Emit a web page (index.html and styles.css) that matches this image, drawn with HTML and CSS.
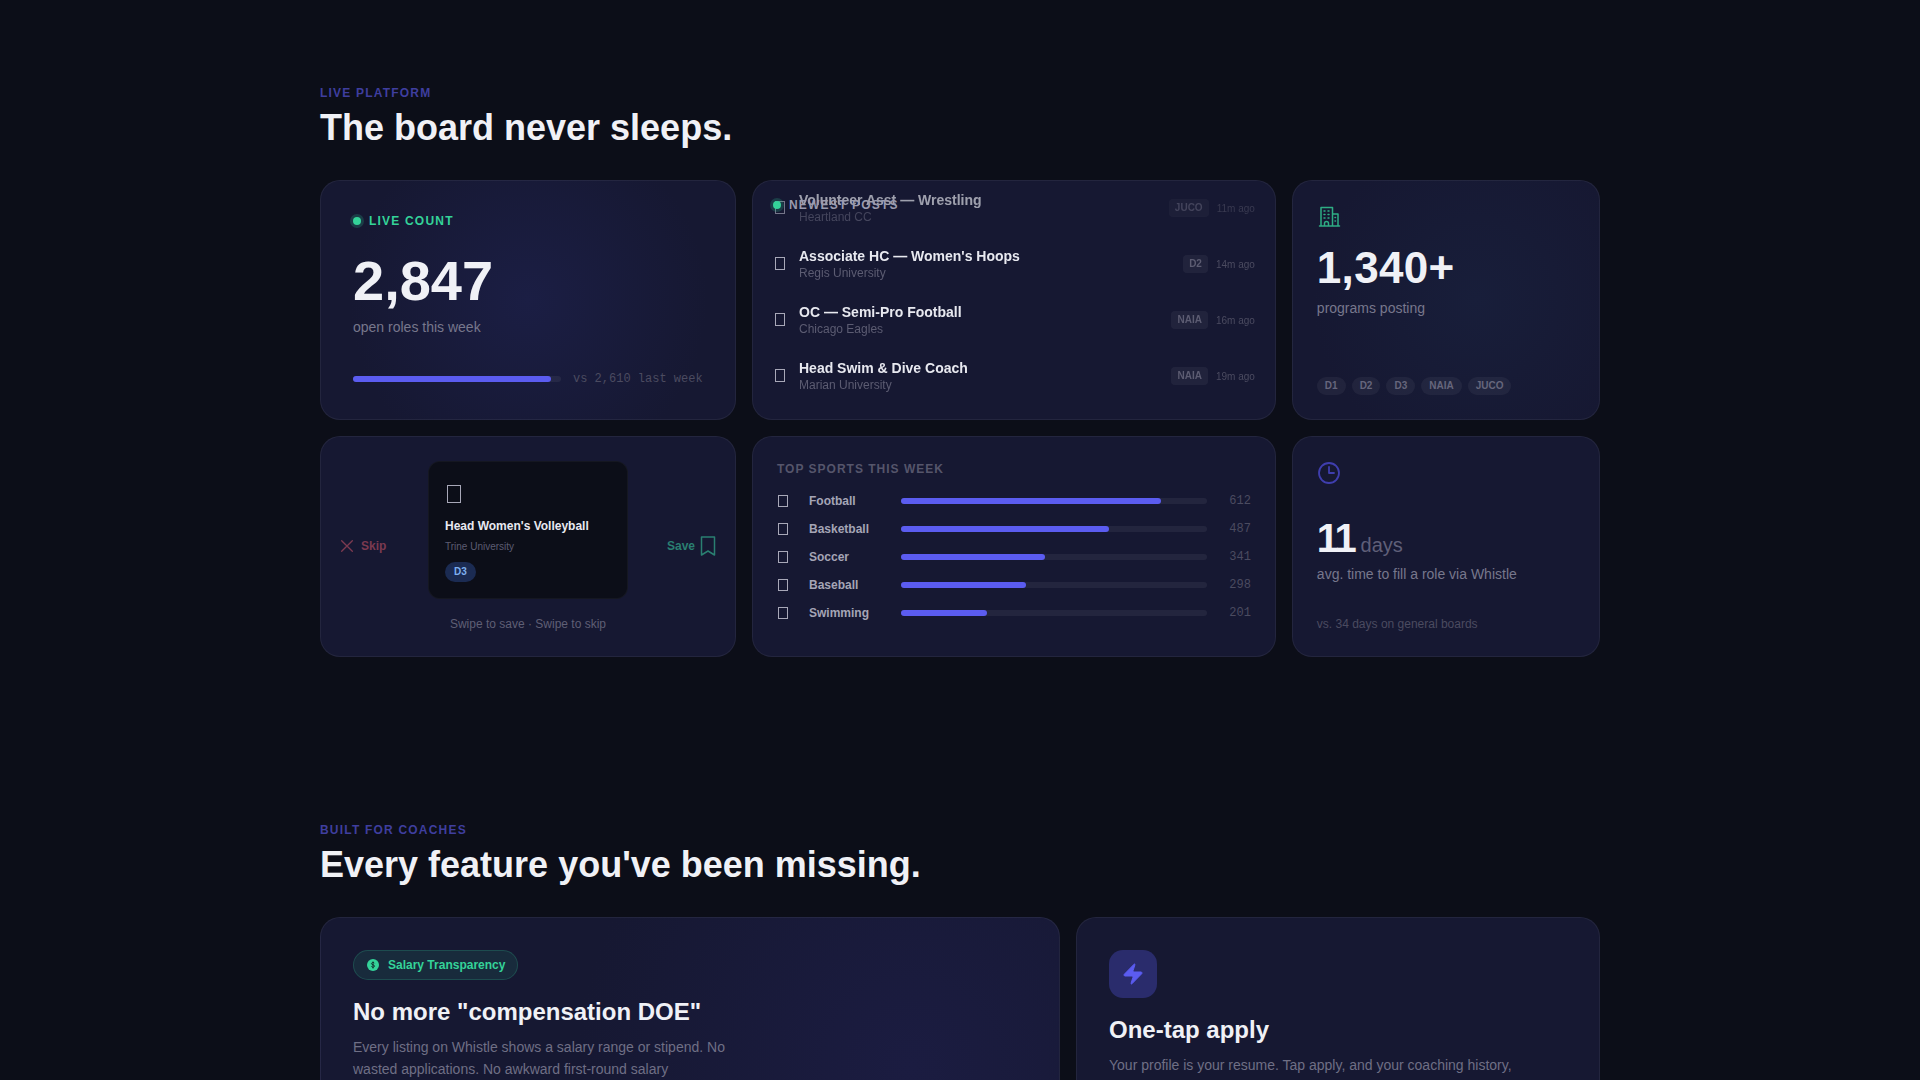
FILE: index.html
```html
<!DOCTYPE html>
<html lang="en">
<head>
  <meta charset="UTF-8" />
  <title>Whistle</title>
  <link rel="stylesheet" href="styles.css">
</head>
<body>
  <section class="section section-live">
    <div class="eyebrow">LIVE PLATFORM</div>
    <h2>The board never sleeps.</h2>
    <div class="bento">
      <div class="card card-count">
        <div class="live-label"><span class="dot"></span>LIVE COUNT</div>
        <div class="big-num">2,847</div>
        <div class="sub">open roles this week</div>
        <div class="compare">
          <div class="track"><div class="fill" style="width: 95%"></div></div>
          <span class="mono">vs 2,610 last week</span>
        </div>
      </div>

      <div class="card card-ticker">
        <div class="ticker-label"><span class="dot"></span>NEWEST POSTS</div>
        <div class="ticker">
          <div class="post">
            <span class="glyph"></span>
            <div class="post-text"><div class="post-title">Volunteer Asst — Wrestling</div><div class="post-org">Heartland CC</div></div>
            <span class="tag">JUCO</span><span class="ago">11m ago</span>
          </div>
          <div class="post">
            <span class="glyph"></span>
            <div class="post-text"><div class="post-title">Associate HC — Women's Hoops</div><div class="post-org">Regis University</div></div>
            <span class="tag">D2</span><span class="ago">14m ago</span>
          </div>
          <div class="post">
            <span class="glyph"></span>
            <div class="post-text"><div class="post-title">OC — Semi-Pro Football</div><div class="post-org">Chicago Eagles</div></div>
            <span class="tag">NAIA</span><span class="ago">16m ago</span>
          </div>
          <div class="post">
            <span class="glyph"></span>
            <div class="post-text"><div class="post-title">Head Swim &amp; Dive Coach</div><div class="post-org">Marian University</div></div>
            <span class="tag">NAIA</span><span class="ago">19m ago</span>
          </div>
        </div>
      </div>

      <div class="card card-programs">
        <svg class="stat-icon green" viewBox="0 0 24 24" fill="none" stroke="currentColor" stroke-width="1.5" stroke-linecap="round" stroke-linejoin="round">
          <path d="M2.500 21h20M4 21V2.500h11.500V21M15.500 9H21v12M7 6h1M11 6h1M7 9.500h1M11 9.500h1M7 13h1M11 13h1M7.500 21v-2.500a2 2 0 0 1 4 0V21M18 12.500h.5M18 16h.5"/>
        </svg>
        <div class="mid-num">1,340+</div>
        <div class="sub">programs posting</div>
        <div class="pills">
          <span class="pill">D1</span><span class="pill">D2</span><span class="pill">D3</span><span class="pill">NAIA</span><span class="pill">JUCO</span>
        </div>
      </div>

      <div class="card card-swipe">
        <div class="swipe-act skip">
          <svg viewBox="0 0 24 24" fill="none" stroke="currentColor" stroke-width="2" stroke-linecap="round"><path d="M4 4l16 16M20 4L4 20"/></svg>
          Skip
        </div>
        <div class="job-card">
          <span class="glyph glyph-lg"></span>
          <div class="job-title">Head Women's Volleyball</div>
          <div class="job-org">Trine University</div>
          <span class="job-tag">D3</span>
        </div>
        <div class="swipe-act save">
          Save
          <svg viewBox="0 0 24 24" fill="none" stroke="currentColor" stroke-width="1.500" stroke-linejoin="round"><path d="M5.500 3h13v18l-6.500-4-6.500 4z"/></svg>
        </div>
        <div class="swipe-hint">Swipe to save · Swipe to skip</div>
      </div>

      <div class="card card-sports">
        <div class="sports-title">TOP SPORTS THIS WEEK</div>
        <div class="sport"><span class="glyph"></span><span class="sport-name">Football</span><div class="track"><div class="fill" style="width: 85%"></div></div><span class="mono">612</span></div>
        <div class="sport"><span class="glyph"></span><span class="sport-name">Basketball</span><div class="track"><div class="fill" style="width: 68%"></div></div><span class="mono">487</span></div>
        <div class="sport"><span class="glyph"></span><span class="sport-name">Soccer</span><div class="track"><div class="fill" style="width: 47%"></div></div><span class="mono">341</span></div>
        <div class="sport"><span class="glyph"></span><span class="sport-name">Baseball</span><div class="track"><div class="fill" style="width: 41%"></div></div><span class="mono">298</span></div>
        <div class="sport"><span class="glyph"></span><span class="sport-name">Swimming</span><div class="track"><div class="fill" style="width: 28%"></div></div><span class="mono">201</span></div>
      </div>

      <div class="card card-days">
        <svg class="stat-icon indigo" viewBox="0 0 24 24" fill="none" stroke="currentColor" stroke-width="1.8" stroke-linecap="round" stroke-linejoin="round">
          <circle cx="12" cy="12" r="10"/><path d="M12 6v6h5"/>
        </svg>
        <div class="days-line"><span class="days-num">11</span> <span class="days-unit">days</span></div>
        <div class="sub">avg. time to fill a role via Whistle</div>
        <div class="days-note">vs. 34 days on general boards</div>
      </div>
    </div>
  </section>

  <section class="section section-features">
    <div class="eyebrow">BUILT FOR COACHES</div>
    <h2>Every feature you've been missing.</h2>
    <div class="features">
      <div class="card feature feature-salary">
        <div class="badge">
          <svg viewBox="0 0 24 24"><circle cx="12" cy="12" r="12" fill="currentColor"/><path d="M15 8.500c-.5-1-1.500-1.500-3-1.500-1.800 0-3 .9-3 2.300 0 3.200 6 1.600 6 4.900 0 1.400-1.300 2.300-3 2.300-1.600 0-2.700-.6-3.200-1.700M12 5v14" fill="none" stroke="#12302f" stroke-width="2"/></svg>
          Salary Transparency
        </div>
        <h3>No more "compensation DOE"</h3>
        <p class="salary-copy">Every listing on Whistle shows a salary range or stipend. No wasted applications. No awkward first-round salary conversations.</p>
      </div>
      <div class="card feature">
        <div class="tile">
          <svg viewBox="0 0 24 24" fill="currentColor" stroke="currentColor"><path d="M4 14a1 1 0 0 1-.78-1.630l9.900-10.200a.5.5 0 0 1 .86.46l-1.920 6.020A1 1 0 0 0 13 10h7a1 1 0 0 1 .78 1.630l-9.900 10.200a.5.5 0 0 1-.86-.46l1.920-6.020A1 1 0 0 0 11 14z"/></svg>
        </div>
        <h3>One-tap apply</h3>
        <p>Your profile is your resume. Tap apply, and your coaching history, references and film go straight to the program.</p>
      </div>
    </div>
  </section>
</body>
</html>
```

FILE: styles.css
```css
html, body {
  height: 1080px;
  overflow: hidden;
}
body {
  margin: 0;
  background: #0c0e18;
  color: #f0f1f6;
  font-family: "Liberation Sans", Arial, sans-serif;
}

.section {
  width: 1280px;
  margin: 0 auto;
}
.section-live { padding-top: 86px; }
.section-features { padding-top: 166px; }

.eyebrow {
  font-size: 12px;
  line-height: 14px;
  font-weight: 700;
  letter-spacing: 1.2px;
  color: #3f3e9f;
  margin-bottom: 7px;
}
h2 {
  margin: 0 0 31px;
  font-size: 36px;
  line-height: 42px;
  font-weight: 700;
  color: #f0f1f6;
}

.bento {
  display: grid;
  grid-template-columns: 1.35fr 1.7fr 1fr;
  grid-template-rows: 240px 221px;
  gap: 16px;
}
.card {
  box-sizing: border-box;
  position: relative;
  overflow: hidden;
  background: #161832;
  border: 1px solid rgba(255, 255, 255, 0.06);
  border-radius: 20px;
}

.dot {
  width: 8px;
  height: 8px;
  border-radius: 50%;
  background: #34d399;
  box-shadow: 0 0 0 3px rgba(52, 211, 153, 0.2);
}
.mono {
  font-family: "Liberation Mono", monospace;
  font-size: 12px;
  color: #4b4b60;
}
.sub {
  font-size: 14px;
  line-height: 20px;
  color: #77778c;
}
.track {
  height: 6px;
  border-radius: 3px;
  background: rgba(255, 255, 255, 0.06);
}
.fill {
  height: 100%;
  border-radius: 3px;
  background: #5b5cf0;
}
/* missing-glyph box in front of each sport */
.glyph {
  box-sizing: border-box;
  display: block;
  flex: none;
  width: 10px;
  height: 12px;
  border: 1px solid #a8a8b8;
}

/* live count */
.card-count {
  display: flex;
  flex-direction: column;
  padding: 32px;
  background: radial-gradient(circle at 50% 50%, #1b1e44 0%, #161832 75%);
}
.live-label {
  display: flex;
  align-items: center;
  gap: 8px;
  font-size: 12px;
  line-height: 16px;
  font-weight: 700;
  letter-spacing: 1.2px;
  color: #34d399;
  margin-bottom: 20px;
}
.big-num {
  font-size: 56px;
  line-height: 64px;
  font-weight: 700;
  color: #f0f1f6;
  margin-bottom: 4px;
}
.compare {
  display: flex;
  align-items: center;
  gap: 12px;
  margin-top: auto;
  margin-bottom: 1px;
  white-space: nowrap;
}
.compare .track { width: 208px; flex: none; }

/* newest posts */
.ticker-label {
  position: absolute;
  top: 16px;
  left: 20px;
  z-index: 2;
  display: flex;
  align-items: center;
  gap: 8px;
  font-size: 12px;
  line-height: 16px;
  font-weight: 700;
  letter-spacing: 1.2px;
  color: #9a9aae;
}
.ticker {
  height: 100%;
  margin-top: -1px;
  padding: 0 20px 0 22px;
  -webkit-mask-image: linear-gradient(to bottom, rgba(0, 0, 0, 0.65) 15%, #000 30%);
  mask-image: linear-gradient(to bottom, rgba(0, 0, 0, 0.65) 15%, #000 30%);
}
.post {
  height: 56px;
  display: flex;
  align-items: center;
  gap: 14px;
}
.post .glyph { height: 13px; margin-top: -2px; }
.post-text { flex: 1; }
.post-title {
  font-size: 14px;
  line-height: 17px;
  font-weight: 700;
  color: #e8e9f0;
}
.post-org {
  font-size: 12px;
  line-height: 16px;
  color: #5c5c72;
}
.tag {
  font-size: 10px;
  line-height: 12px;
  font-weight: 700;
  color: #5c5c72;
  background: rgba(255, 255, 255, 0.05);
  border-radius: 4px;
  padding: 3px 6px;
}
.ago {
  font-size: 10px;
  color: #4b4b60;
  margin-left: -6px;
}

/* programs */
.card-programs {
  display: flex;
  flex-direction: column;
  padding: 24px;
  background: radial-gradient(circle at 60% 50%, #181e3a 0%, #161832 75%);
}
.stat-icon {
  width: 24px;
  height: 24px;
  flex: none;
}
.stat-icon.green { color: #34d399; opacity: 0.8; }
.stat-icon.indigo { color: #3f3eae; }
.mid-num {
  font-size: 44px;
  line-height: 50px;
  font-weight: 700;
  letter-spacing: 0.3px;
  margin-top: 14px;
  margin-bottom: 5px;
  color: #f0f1f6;
}
.pills {
  display: flex;
  gap: 6px;
  margin-top: auto;
}
.pill {
  font-size: 10px;
  line-height: 12px;
  font-weight: 700;
  color: #66667c;
  background: rgba(255, 255, 255, 0.05);
  border-radius: 10px;
  padding: 3px 8px;
}

/* swipe */
.card-swipe {
  display: flex;
  flex-direction: column;
  align-items: center;
  padding-top: 24px;
}
.swipe-act {
  position: absolute;
  top: 50%;
  transform: translateY(-50%);
  margin-top: -1px;
  display: flex;
  align-items: center;
  gap: 6px;
  font-size: 12px;
  font-weight: 700;
}
.swipe-act svg { width: 16px; height: 16px; }
.skip { color: #7c3a50; left: 18px; }
.save { color: #2a7f71; right: 15px; gap: 1px; }
.save svg { width: 24px; height: 24px; }
.job-card {
  box-sizing: border-box;
  width: 200px;
  height: 138px;
  padding: 23px 16px 0;
  background: #0c0e18;
  border: 1px solid rgba(255, 255, 255, 0.04);
  border-radius: 12px;
}
.glyph-lg {
  width: 14px;
  height: 18px;
  margin: 0 0 15px 2px;
}
.job-title {
  font-size: 12px;
  line-height: 16px;
  font-weight: 700;
  color: #e8e9f0;
  margin-bottom: 5px;
}
.job-org {
  font-size: 10px;
  line-height: 16px;
  color: #5c5c72;
  margin-bottom: 6px;
}
.job-tag {
  display: inline-block;
  font-size: 10px;
  line-height: 12px;
  font-weight: 700;
  color: #7fb0f0;
  background: #1b2b52;
  border-radius: 10px;
  padding: 4px 9px;
}
.swipe-hint {
  margin-top: 17px;
  text-align: center;
  font-size: 12px;
  line-height: 16px;
  color: #5f5f75;
}

/* top sports */
.card-sports { padding: 24px 24px 0; }
.sports-title {
  font-size: 12px;
  line-height: 16px;
  font-weight: 700;
  letter-spacing: 1px;
  color: #55556b;
  margin-bottom: 10px;
}
.sport {
  display: grid;
  grid-template-columns: 32px 92px 1fr 44px;
  align-items: center;
  height: 28px;
}
.sport .glyph { margin-left: 1px; margin-top: -1px; }
.sport-name {
  font-size: 12px;
  font-weight: 700;
  color: #a5a5b6;
}
.sport .mono { text-align: right; }

/* days */
.card-days {
  display: flex;
  flex-direction: column;
  padding: 24px;
}
.days-line {
  margin-top: 38px;
  margin-bottom: 2px;
  line-height: 31px;
}
.days-num {
  font-size: 40px;
  font-weight: 700;
  letter-spacing: -2.5px;
  color: #f0f1f6;
}
.days-unit {
  font-size: 20px;
  color: #5f5f78;
  margin-left: 2px;
}
.days-note {
  margin-top: auto;
  margin-bottom: 1px;
  font-size: 12px;
  color: #4b4b60;
}

/* features */
.features {
  display: grid;
  grid-template-columns: 740fr 524fr;
  gap: 16px;
}
.feature {
  padding: 32px;
  height: 300px;
}
.feature-salary {
  background: radial-gradient(circle at 80% 50%, #1b1c41 0%, #161832 55%);
}
.badge {
  box-sizing: border-box;
  display: inline-flex;
  align-items: center;
  gap: 9px;
  height: 30px;
  padding: 0 12px 0 13px;
  font-size: 12px;
  font-weight: 700;
  color: #34d399;
  background: rgba(52, 211, 153, 0.1);
  border: 1px solid rgba(52, 211, 153, 0.2);
  border-radius: 15px;
}
.badge svg { width: 12px; height: 12px; }
.tile {
  width: 48px;
  height: 48px;
  display: flex;
  align-items: center;
  justify-content: center;
  border-radius: 14px;
  background: #2a2c6c;
  color: #5b5cf0;
}
.tile svg { width: 24px; height: 24px; }
h3 {
  margin: 16px 0 8px;
  font-size: 24px;
  line-height: 32px;
  font-weight: 700;
  color: #f0f1f6;
}
.feature p {
  margin: 0;
  font-size: 14px;
  line-height: 22px;
  color: #6f6f85;
}
.salary-copy { max-width: 380px; }
```
